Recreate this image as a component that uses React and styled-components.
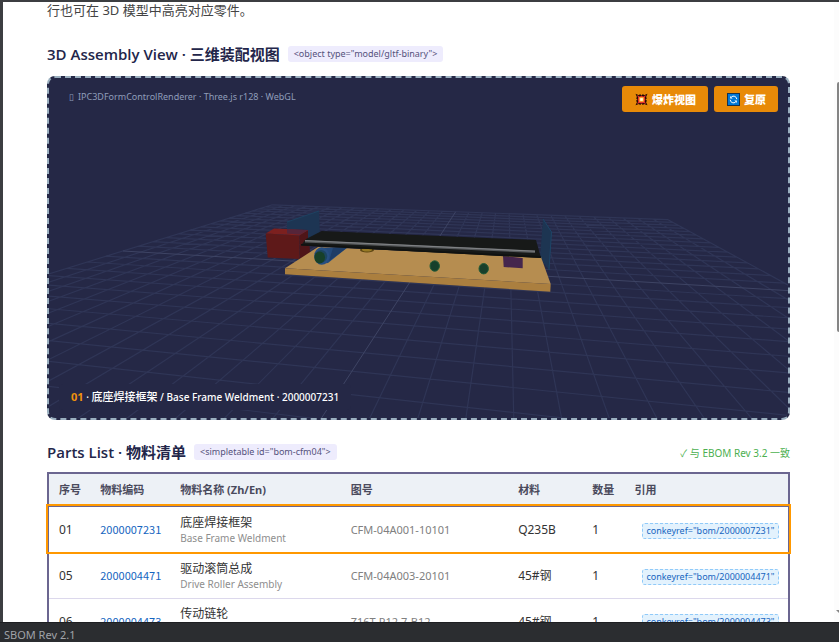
import React from 'react';
import styled, { createGlobalStyle } from 'styled-components';

const GlobalStyle = createGlobalStyle`
  * { box-sizing: border-box; }
  body {
    margin: 0;
    background: #ffffff;
    font-family: "Noto Sans", "Noto Sans CJK SC", sans-serif;
    color: #333333;
  }
`;

const Shell = styled.div`
  display: flex;
  flex-direction: column;
  height: 100vh;
  overflow: hidden;
`;

const TopEdge = styled.div`
  flex: none;
  height: 2px;
  background: #3c3e41;
`;

const Workspace = styled.div`
  flex: 1;
  min-height: 0;
  display: flex;
  border-left: 3px solid #3c3e41;
`;

const Document = styled.main`
  flex: 1;
  min-width: 0;
  overflow: hidden;
  padding: 0 44px;
`;

const ScrollTrack = styled.div`
  flex: none;
  width: 5px;
  display: flex;
  flex-direction: column;
  align-items: flex-end;
  padding-top: 80px;
  background: #fcfcfc;
`;

const ScrollThumb = styled.div`
  width: 2px;
  height: 250px;
  border-radius: 2px 0 0 2px;
  background: #858585;
`;

const ScrollArrow = styled.svg`
  margin-top: auto;
  margin-bottom: 8px;
`;

const StatusBar = styled.footer`
  flex: none;
  height: 20px;
  padding-left: 4px;
  border-top: 1px solid #1e1f22;
  background: #2b2d30;
  color: #a0a3a8;
  font-size: 11px;
  line-height: 24px;
`;

const Intro = styled.p`
  margin: 0;
  font-size: 13px;
  line-height: 16px;
  color: #444444;
`;

const SectionHead = styled.header`
  display: flex;
  align-items: center;
  gap: 8px;
  height: 20px;
  margin-top: ${(p) => p.$above}px;
  margin-bottom: ${(p) => p.$below}px;
`;

const Title = styled.h2`
  margin: 0;
  font-family: "Open Sans", "Noto Sans CJK SC", sans-serif;
  font-size: 15px;
  line-height: 20px;
  font-weight: 600;
  color: #23264a;
  white-space: nowrap;
`;

const Tag = styled.code`
  padding: 0 6px;
  border-radius: 3px;
  background: #eeecfd;
  color: #55527c;
  font-family: "Noto Sans", sans-serif;
  font-size: 9px;
  line-height: 16px;
  white-space: nowrap;
`;

const SyncNote = styled.span`
  margin-left: auto;
  color: #4caf50;
  font-size: 10px;
  white-space: nowrap;
`;

const Viewport = styled.section`
  position: relative;
  border: 2px dashed #9aafbf;
  border-radius: 8px;
  background: #252846;
  overflow: hidden;
`;

const Scene = styled.svg`
  display: block;
  width: 100%;
  height: auto;
`;

const Caption = styled.div`
  position: absolute;
  top: 12px;
  left: 20px;
  display: flex;
  gap: 4px;
  color: #8f9dba;
  font-size: 9px;
  line-height: 14px;
`;

const Tools = styled.div`
  position: absolute;
  top: 8px;
  right: 10px;
  display: flex;
  gap: 6px;
`;

const ToolButton = styled.button`
  display: flex;
  align-items: center;
  gap: 4px;
  height: 26px;
  padding: 0 12px 0 13px;
  border: 0;
  border-radius: 3px;
  background: #e88a08;
  color: #ffffff;
  font: 900 11px "Noto Sans", "Noto Sans CJK SC", sans-serif;
`;

const PartLabel = styled.div`
  position: absolute;
  left: 10px;
  bottom: 8px;
  padding: 4px 12px;
  border-radius: 4px;
  background: #252846;
  color: #ffffff;
  font-size: 10px;
  font-weight: 500;
  line-height: 18px;
`;

const PartNumber = styled.b`
  color: #f0920c;
  font-size: 11px;
`;

const PartName = styled.span`
  font-size: 11px;
`;

const Table = styled.table`
  width: 100%;
  table-layout: fixed;
  border-collapse: collapse;
  border: 2px solid #6b6690;
  font-size: 12px;
  line-height: 16px;
  text-align: left;
`;

const HeadCell = styled.th`
  height: 33px;
  padding: 0 10px;
  border-bottom: 2px solid #6b6690;
  background: #edf1f6;
  color: #4a4a5c;
  font-size: 11px;
  font-weight: 700;
  white-space: nowrap;
`;

const Row = styled.tr`
  outline: ${(p) => (p.$selected ? '2px solid #ff9800' : 'none')};
`;

const Cell = styled.td`
  height: 46px;
  padding: 2px 10px 0;
  border-bottom: 1px solid #dcd8ec;
  white-space: nowrap;
`;

const PartLink = styled.a`
  color: #1565c0;
  font-family: "Noto Sans CJK SC", sans-serif;
  font-size: 11px;
  line-height: 12px;
  text-decoration: none;
`;

const English = styled.div`
  color: #8e8e8e;
  font-size: 10px;
  line-height: 15px;
`;

const Drawing = styled.span`
  color: #808080;
  font-size: 11px;
`;

const KeyRef = styled.code`
  display: inline-block;
  margin-left: 8px;
  padding: 0 3px;
  border: 1px dashed #90caf9;
  border-radius: 3px;
  background: #e3f2fd;
  color: #1565c0;
  font-family: "Noto Sans", sans-serif;
  font-size: 9px;
  line-height: 14px;
`;

const DIVISIONS = 15;

// Perspective projection of the ground plane; u and v run from -1 to 1.
const project = (u, v) => {
  const d = 1 - 0.126 * u - 0.716 * v;
  return [(280.2 * u - 363.3 * v + 418.7) / d, (-14 * u - 94.7 * v + 268.6) / d];
};

const gridLine = (from, to) => {
  const [x1, y1] = project(...from);
  const [x2, y2] = project(...to);
  return `M${x1.toFixed(1)} ${y1.toFixed(1)}L${x2.toFixed(1)} ${y2.toFixed(1)}`;
};

const steps = Array.from({ length: DIVISIONS * 2 + 1 }, (_, i) => (i - DIVISIONS) / DIVISIONS);
const minorGrid = steps
  .filter((s) => s !== 0)
  .map((s) => gridLine([s, -1], [s, 1]) + gridLine([-1, s], [1, s]))
  .join('');
const axes = gridLine([0, -1], [0, 1]) + gridLine([-1, 0], [1, 0]);

function AssemblyScene() {
  return (
    <Scene viewBox="49 78 739 340" role="img" aria-label="Conveyor assembly">
      <path d={minorGrid} stroke="#2f3556" strokeWidth="1.2" fill="none" />
      <path d={axes} stroke="#3e4464" fill="none" />
      <path d="M543 219L551.5 232L549 270L540 258Z" fill="#1d3552" />
      <path d="M543 219L551.5 232L549 270" fill="none" stroke="#1d4567" />
      <path d="M265.7 233.5L274 228.5L309 230L299.5 235.5Z" fill="#7c201f" />
      <path d="M265.7 233.5L299.5 235.5L299.5 259L267.7 257.5Z" fill="#5e1919" />
      <path d="M299.5 235.5L308.5 230L310 253L299.5 259Z" fill="#4f1518" />
      <path d="M287 222L319 211L320 237L308 240L308 230L287 229Z" fill="#1d3553" />
      <path d="M287 229L308 230L300 234.5L287 233.5Z" fill="#55253a" />
      <path d="M287 222L319 211" stroke="#1d4262" />
      <path d="M285 268.3L318 247L541 257L550.7 284Z" fill="#b68d50" />
      <path d="M285 268.3L550.7 284L550.3 291.7L285 274.3Z" fill="#ab7f3f" />
      <ellipse cx="367" cy="250" rx="7" ry="2.6" fill="#5c4613" />
      <ellipse cx="367" cy="249.4" rx="5" ry="2" fill="#987a25" />
      <path d="M319 248L348 247L328 263L321 264Z" fill="#244a7b" />
      <path d="M333 248L348 247L329 261Z" fill="#1f3d66" />
      <ellipse cx="321.7" cy="256" rx="7.5" ry="8.7" fill="#274f82" />
      <ellipse cx="321" cy="256.3" rx="6.2" ry="6.3" fill="#1c4560" />
      <ellipse cx="319.7" cy="257.5" rx="5.3" ry="6" fill="#174029" />
      <path d="M503 256L522.7 258L522.7 268.3L503.7 267Z" fill="#45264d" />
      <g fill="#173f2b" stroke="#215b36">
        <ellipse cx="434.7" cy="266" rx="4.7" ry="5.2" />
        <ellipse cx="483.7" cy="268.7" rx="4.7" ry="5.2" />
      </g>
      <path d="M321.7 231L536 240L541 258L301 245.5L306 239Z" fill="#171918" />
      <path d="M301 244L541 256V258L301 245.5Z" fill="#101211" />
      <path d="M305 241.2L535 251.7" stroke="#55585a" strokeWidth="2.6" />
      <path d="M305 240.6L535 251.2" stroke="#828487" />
    </Scene>
  );
}

function BurstIcon() {
  return (
    <svg width="13" height="13" viewBox="0 0 13 13" aria-hidden="true">
      <path d="M0.5 0.8L4 2.2L5 1L6.5 2.4L8 1L9 2.2L12.5 0.8L11 4.2L12 5L10.8 6.5L12 8L11 9L12.5 12.2L9 11L8 12L6.5 10.8L5 12L4 11L0.5 12.2L2 9L1 8L2.2 6.5L1 5L2 4.2Z" fill="#1e0a06" />
      <path d="M2 2L4.6 3.4L6.5 2.8L8.4 3.4L11 2L9.8 4.8L10.4 6.5L9.8 8.4L11 11L8.4 9.9L6.5 10.4L4.6 9.9L2 11L3.2 8.4L2.6 6.5L3.2 4.8Z" fill="#e5302a" />
      <rect x="4.2" y="4.2" width="4.6" height="4.6" fill="#ffb72b" />
      <rect x="5.2" y="5.2" width="2.6" height="2.6" fill="#fffbe0" />
    </svg>
  );
}

function ResetIcon() {
  return (
    <svg width="13" height="13" viewBox="0 0 13 13" aria-hidden="true">
      <rect x="0.5" y="0.5" width="12" height="12" fill="#0078d7" stroke="#17324d" />
      <path d="M3.2 6.8A3.3 3.3 0 0 0 8.6 9.1M9.8 6.2A3.3 3.3 0 0 0 4.4 3.9" fill="none" stroke="#ffffff" />
      <path d="M3.2 3V5.4H5.6ZM9.8 10V7.6H7.4Z" fill="#ffffff" />
    </svg>
  );
}

const columns = [
  ['序号', '5.7%'],
  ['物料编码', '10.8%'],
  ['物料名称 (Zh/En)', '23%'],
  ['图号', '22.6%'],
  ['材料', '10%'],
  ['数量', '5.7%'],
  ['引用', '22.2%'],
];

const parts = [
  { no: '01', code: '2000007231', zh: '底座焊接框架', en: 'Base Frame Weldment', drawing: 'CFM-04A001-10101', material: 'Q235B', qty: 1 },
  { no: '05', code: '2000004471', zh: '驱动滚筒总成', en: 'Drive Roller Assembly', drawing: 'CFM-04A003-20101', material: '45#钢', qty: 1 },
  { no: '06', code: '2000004473', zh: '传动链轮', en: 'Drive Sprocket', drawing: 'Z16T-P12.7-B12', material: '45#钢', qty: 1 },
];

function PartsTable() {
  return (
    <Table>
      <colgroup>
        {columns.map(([name, width]) => (
          <col key={name} width={width} />
        ))}
      </colgroup>
      <thead>
        <tr>
          {columns.map(([name]) => (
            <HeadCell key={name} scope="col">{name}</HeadCell>
          ))}
        </tr>
      </thead>
      <tbody>
        {parts.map((part, i) => (
          <Row key={part.no} $selected={i === 0}>
            <Cell>{part.no}</Cell>
            <Cell><PartLink href={`#${part.code}`}>{part.code}</PartLink></Cell>
            <Cell>
              {part.zh}
              <English>{part.en}</English>
            </Cell>
            <Cell><Drawing>{part.drawing}</Drawing></Cell>
            <Cell>{part.material}</Cell>
            <Cell>{part.qty}</Cell>
            <Cell><KeyRef>{`conkeyref="bom/${part.code}"`}</KeyRef></Cell>
          </Row>
        ))}
      </tbody>
    </Table>
  );
}

export default function App() {
  return (
    <Shell>
      <GlobalStyle />
      <TopEdge />
      <Workspace>
        <Document>
          <Intro>行也可在 3D 模型中高亮对应零件。</Intro>
          <SectionHead $above={26} $below={12}>
            <Title>3D Assembly View · 三维装配视图</Title>
            <Tag>{'<object type="model/gltf-binary">'}</Tag>
          </SectionHead>
          <Viewport>
            <AssemblyScene />
            <Caption>
              <span>▯</span>
              <span>IPC3DFormControlRenderer · Three.js r128 · WebGL</span>
            </Caption>
            <Tools>
              <ToolButton type="button"><BurstIcon />爆炸视图</ToolButton>
              <ToolButton type="button"><ResetIcon />复原</ToolButton>
            </Tools>
            <PartLabel>
              <PartNumber>01</PartNumber> · <PartName>底座焊接框架</PartName> / Base Frame Weldment · 2000007231
            </PartLabel>
          </Viewport>
          <SectionHead $above={22} $below={10}>
            <Title>Parts List · 物料清单</Title>
            <Tag>{'<simpletable id="bom-cfm04">'}</Tag>
            <SyncNote>✓ 与 EBOM Rev 3.2 一致</SyncNote>
          </SectionHead>
          <PartsTable />
        </Document>
        <ScrollTrack>
          <ScrollThumb />
          <ScrollArrow width="3" height="4" viewBox="0 0 3 4" aria-hidden="true">
            <path d="M0 0H3V3Z" fill="#858585" />
          </ScrollArrow>
        </ScrollTrack>
      </Workspace>
      <StatusBar>SBOM Rev 2.1</StatusBar>
    </Shell>
  );
}
